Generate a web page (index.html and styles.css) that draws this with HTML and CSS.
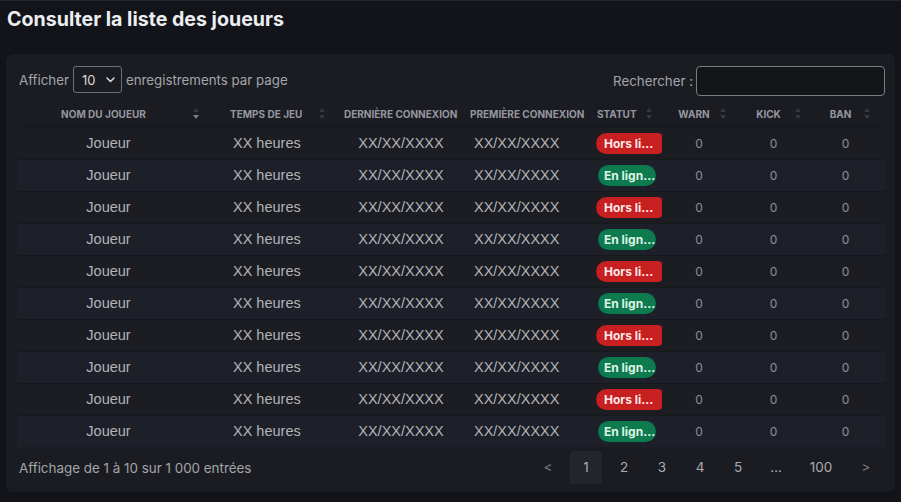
FILE: index.html
```html
<!DOCTYPE html>
<html lang="fr">
<head>
<meta charset="utf-8">
<title>Consulter la liste des joueurs</title>
<link rel="stylesheet" href="styles.css">
</head>
<body>
<h1 class="title">Consulter la liste des joueurs</h1>
<section class="card">
  <div class="controls">
    <label class="length">Afficher
      <span class="select"><span>10</span>
        <svg width="9" height="6" viewBox="0 0 9 6"><path d="M1 1l3.5 3.5L8 1" fill="none" stroke="#d6d6da" stroke-width="1.6" stroke-linecap="round" stroke-linejoin="round"/></svg>
      </span>
      enregistrements par page</label>
    <label class="search">Rechercher :<span class="input"></span></label>
  </div>
  <table class="players">
    <colgroup>
      <col class="w1"><col class="w2"><col class="w3"><col class="w4"><col class="w5"><col class="w6"><col class="w7"><col class="w8">
    </colgroup>
    <thead>
      <tr>
        <th class="c-name sort active">Nom du joueur<i class="arrows"></i></th>
        <th class="c-time sort">Temps de jeu<i class="arrows"></i></th>
        <th class="c-last">Dernière connexion</th>
        <th class="c-first">Première connexion</th>
        <th class="c-stat sort">Statut<i class="arrows"></i></th>
        <th class="c-num sort">Warn<i class="arrows"></i></th>
        <th class="c-num sort">Kick<i class="arrows"></i></th>
        <th class="c-num sort">Ban<i class="arrows"></i></th>
      </tr>
    </thead>
    <tbody>
      <tr><td class="c-name">Joueur</td><td class="c-time">XX heures</td><td class="c-last">XX/XX/XXXX</td><td class="c-first">XX/XX/XXXX</td><td class="c-stat"><span class="badge off">Hors li...</span></td><td class="c-num">0</td><td class="c-num">0</td><td class="c-num">0</td></tr>
      <tr><td class="c-name">Joueur</td><td class="c-time">XX heures</td><td class="c-last">XX/XX/XXXX</td><td class="c-first">XX/XX/XXXX</td><td class="c-stat"><span class="badge on">En lign...</span></td><td class="c-num">0</td><td class="c-num">0</td><td class="c-num">0</td></tr>
      <tr><td class="c-name">Joueur</td><td class="c-time">XX heures</td><td class="c-last">XX/XX/XXXX</td><td class="c-first">XX/XX/XXXX</td><td class="c-stat"><span class="badge off">Hors li...</span></td><td class="c-num">0</td><td class="c-num">0</td><td class="c-num">0</td></tr>
      <tr><td class="c-name">Joueur</td><td class="c-time">XX heures</td><td class="c-last">XX/XX/XXXX</td><td class="c-first">XX/XX/XXXX</td><td class="c-stat"><span class="badge on">En lign...</span></td><td class="c-num">0</td><td class="c-num">0</td><td class="c-num">0</td></tr>
      <tr><td class="c-name">Joueur</td><td class="c-time">XX heures</td><td class="c-last">XX/XX/XXXX</td><td class="c-first">XX/XX/XXXX</td><td class="c-stat"><span class="badge off">Hors li...</span></td><td class="c-num">0</td><td class="c-num">0</td><td class="c-num">0</td></tr>
      <tr><td class="c-name">Joueur</td><td class="c-time">XX heures</td><td class="c-last">XX/XX/XXXX</td><td class="c-first">XX/XX/XXXX</td><td class="c-stat"><span class="badge on">En lign...</span></td><td class="c-num">0</td><td class="c-num">0</td><td class="c-num">0</td></tr>
      <tr><td class="c-name">Joueur</td><td class="c-time">XX heures</td><td class="c-last">XX/XX/XXXX</td><td class="c-first">XX/XX/XXXX</td><td class="c-stat"><span class="badge off">Hors li...</span></td><td class="c-num">0</td><td class="c-num">0</td><td class="c-num">0</td></tr>
      <tr><td class="c-name">Joueur</td><td class="c-time">XX heures</td><td class="c-last">XX/XX/XXXX</td><td class="c-first">XX/XX/XXXX</td><td class="c-stat"><span class="badge on">En lign...</span></td><td class="c-num">0</td><td class="c-num">0</td><td class="c-num">0</td></tr>
      <tr><td class="c-name">Joueur</td><td class="c-time">XX heures</td><td class="c-last">XX/XX/XXXX</td><td class="c-first">XX/XX/XXXX</td><td class="c-stat"><span class="badge off">Hors li...</span></td><td class="c-num">0</td><td class="c-num">0</td><td class="c-num">0</td></tr>
      <tr><td class="c-name">Joueur</td><td class="c-time">XX heures</td><td class="c-last">XX/XX/XXXX</td><td class="c-first">XX/XX/XXXX</td><td class="c-stat"><span class="badge on">En lign...</span></td><td class="c-num">0</td><td class="c-num">0</td><td class="c-num">0</td></tr>
    </tbody>
  </table>
  <div class="footer">
    <div class="info">Affichage de 1 à 10 sur 1 000 entrées</div>
    <nav class="pager">
      <span class="pg nav">&lt;</span>
      <span class="pg current">1</span>
      <span class="pg">2</span>
      <span class="pg">3</span>
      <span class="pg">4</span>
      <span class="pg">5</span>
      <span class="pg">…</span>
      <span class="pg wide">100</span>
      <span class="pg nav">&gt;</span>
    </nav>
  </div>
</section>
</body>
</html>
```
FILE: styles.css
```css
* { box-sizing: border-box; }

body {
  margin: 0;
  background: #131419;
  border-top: 1px solid #26272c;
  font-family: Inter, "Liberation Sans", sans-serif;
  color: #c8c9cd;
  height: 502px;
  overflow: hidden;
}

.title {
  margin: 0;
  padding: 6px 7px 0;
  font-size: 19.6px;
  font-weight: 700;
  line-height: 24px;
  color: #eceef2;
}

.card {
  margin: 23px 6px 0;
  background: #1b1c22;
  border-radius: 7px;
  padding: 12px 10px 7px 11px;
  height: 438px;
}

.controls {
  display: flex;
  justify-content: space-between;
  align-items: center;
  height: 30px;
  font-size: 13.3px;
  color: #a3a5ab;
}

.length, .search {
  display: flex;
  align-items: center;
  gap: 4px;
}

.length { padding-left: 2px; margin-top: -3px; }

.select {
  display: inline-flex;
  align-items: center;
  justify-content: space-between;
  width: 49px;
  height: 27px;
  padding: 0 6px 0 8px;
  border: 1px solid #6d6f76;
  border-radius: 3px;
  color: #d8d9dc;
  font-size: 13px;
}

.search { gap: 3px; }

.input {
  display: block;
  width: 189px;
  height: 30px;
  border: 1px solid #7b7d83;
  border-radius: 4px;
  background: #141519;
}

.players {
  width: 868px;
  table-layout: fixed;
  border-collapse: collapse;
  margin-top: 6px;
}

.w1 { width: 195px; }
.w2 { width: 126px; }
.w3 { width: 130px; }
.w4 { width: 124px; }
.w5 { width: 75px; }
.w6 { width: 74px; }
.w7 { width: 75px; }
.w8 { width: 69px; }

th {
  position: relative;
  height: 25px;
  padding: 2px 0 3px;
  font-size: 10px;
  font-weight: 700;
  text-transform: uppercase;
  color: #9597a0;
  white-space: nowrap;
}

th.c-name { text-align: center; padding-right: 22px; }
th.c-time { text-align: left; padding-left: 18px; }
th.c-last { text-align: left; padding-left: 6px; }
th.c-first { text-align: left; padding-left: 2px; }
th.c-stat { text-align: left; padding-left: 5px; }
th.c-num { text-align: center; padding-right: 20px; }

.arrows {
  position: absolute;
  right: 12px;
  top: 5px;
  width: 7px;
  height: 13px;
}
.arrows::before, .arrows::after {
  content: "";
  position: absolute;
  left: 0;
  border-left: 3.5px solid transparent;
  border-right: 3.5px solid transparent;
}
.arrows::before { top: 1px; border-bottom: 4px solid #353841; }
.arrows::after { bottom: 1px; border-top: 4px solid #353841; }
.active .arrows::after { border-top-color: #7b7e86; }
.c-stat .arrows, .c-num .arrows { right: 14px; }

tbody tr { height: 32px; background: #1b1d23; border-top: 1px solid #17181d; }
tbody tr:nth-child(even) { background: #1d2029; }

td {
  padding: 0;
  font-family: "Liberation Sans", Arial, sans-serif;
  font-size: 14.5px;
  color: #b2b3b7;
  vertical-align: middle;
  white-space: nowrap;
}

td.c-name { text-align: center; padding-right: 12px; }
td.c-time { padding-left: 21px; }
td.c-last { text-align: center; padding-right: 4px; }
td.c-first { padding-left: 6px; }
td.c-stat { padding-left: 4px; }
td.c-num { text-align: center; padding-right: 10px; font-family: Inter, sans-serif; font-size: 12px; color: #8d8f95; }

.badge {
  display: inline-block;
  height: 21px;
  line-height: 21px;
  font-family: Inter, sans-serif;
  font-size: 12px;
  font-weight: 700;
  padding: 0 8px;
}
.badge.off {
  width: 66px;
  background: #c81f20;
  color: #fbe9ea;
  border-radius: 11px 4px 4px 11px;
}
.badge.on {
  width: 58px;
  margin-left: 2px;
  background: #0e7a4f;
  color: #dff3e7;
  border-radius: 11px;
  padding: 0 6px;
}

.footer {
  display: flex;
  justify-content: space-between;
  align-items: center;
  margin-top: 4px;
  height: 33px;
}

.info {
  padding-left: 2px;
  font-size: 13.4px;
  color: #a2a4aa;
}

.pager {
  display: flex;
  align-items: center;
  gap: 6px;
  padding-right: 3px;
  font-size: 13.5px;
  color: #a9abb0;
}

.pg {
  width: 32px;
  height: 33px;
  line-height: 33px;
  text-align: center;
  border-radius: 3px;
}
.pg.wide { width: 46px; }
.pg.nav { color: #7c7e85; }
.pg.current { background: #23252c; color: #a9abb0; }
```
